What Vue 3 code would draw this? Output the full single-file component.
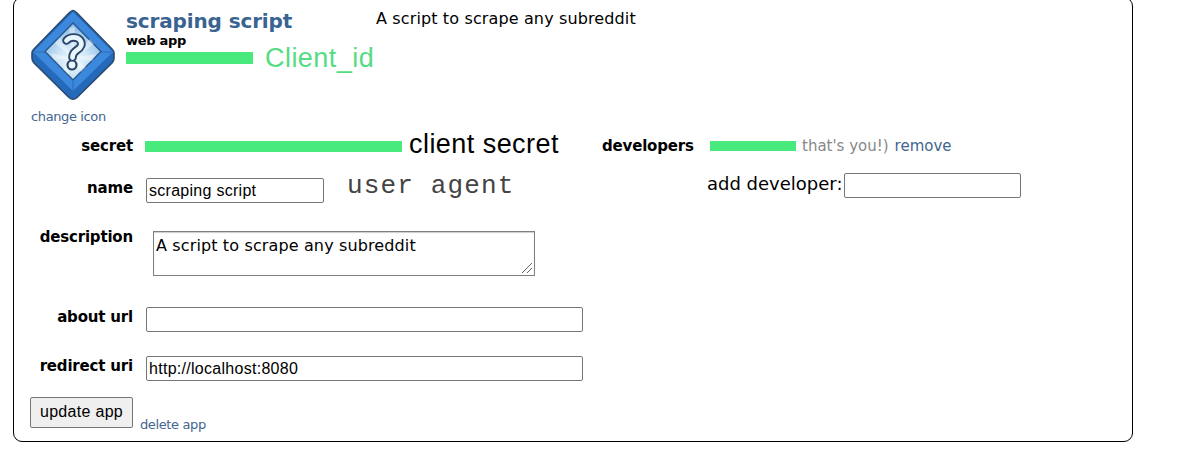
<template>
  <div class="page">
    <div class="app-card">
      <header class="app-header">
        <div class="icon-col">
          <svg class="app-icon" width="84" height="93" viewBox="0 0 84 93">
            <defs>
              <radialGradient id="glow" cx="50%" cy="65%" r="55%">
                <stop offset="0" stop-color="#f4fbfe" />
                <stop offset="0.5" stop-color="#cde5f6" />
                <stop offset="1" stop-color="#94c2ea" />
              </radialGradient>
            </defs>
            <path d="M42 2.5 Q43.5 2.5 46 5 L81 41 Q83 43 83 45 V50 Q83 53 81 55 L46 89.5 Q42 93 38 89.5 L3 55 Q1 53 1 50 V45 Q1 43 3 41 L38 5 Q40.500 2.500 42 2.500Z" fill="#2569bb" stroke="#2a4a70" stroke-width="1.6" />
            <path d="M42 4 L82 44 L42 83 L2 44Z" fill="#3c88dc" />
            <path d="M42 73 V83 M3 44 L14 44 M81 44 L70 44" stroke="#2f6db5" stroke-width="1" fill="none" />
            <path d="M42 15 L70 43.5 L42 72 L14 43.5Z" fill="url(#glow)" stroke="#2b5a90" stroke-width="1.5" />
            <path d="M42 50 L24 35 L29 30Z M42 50 L38 20 L44 19Z M42 50 L59 31 L63 36Z M42 50 L19 45 L23 52Z M42 50 L65 46 L61 53Z M42 50 L32 61 L37 66Z M42 50 L50 64 L55 59Z" fill="#fff" opacity="0.4" />
            <path d="M35.500 32.500 C39 28.500 46 28.500 49 32 C52 36 50 39.500 46 42 C42.500 44.200 41.500 46 41.500 49.500" fill="none" stroke="#2a4668" stroke-width="8.600" stroke-linecap="round" stroke-linejoin="round" />
            <circle cx="41" cy="57" r="5.6" fill="#2a4668" />
            <path d="M35.500 32.500 C39 28.500 46 28.500 49 32 C52 36 50 39.500 46 42 C42.500 44.200 41.500 46 41.500 49.500" fill="none" stroke="#e9f5fc" stroke-width="4.800" stroke-linecap="round" stroke-linejoin="round" />
            <circle cx="41" cy="57" r="3.4" fill="#e9f5fc" />
          </svg>
          <a class="link small">change icon</a>
        </div>
        <div class="title-col">
          <h2 class="title"><a>scraping script</a></h2>
          <div class="app-type">web app</div>
          <div class="client-id">
            <span class="redacted id-bar"></span>
            <span class="id-note">Client_id</span>
          </div>
        </div>
        <div class="summary">A script to scrape any subreddit</div>
      </header>

      <div class="columns">
        <form class="edit-form" @submit.prevent>
          <div class="row secret-row">
            <label>secret</label>
            <div class="value">
              <span class="redacted secret-bar"></span>
              <span class="secret-note">client secret</span>
            </div>
          </div>
          <div class="row name-row">
            <label for="name">name</label>
            <div class="value">
              <input id="name" v-model="form.name" class="short" type="text">
              <span class="agent-note">user agent</span>
            </div>
          </div>
          <div class="row desc-row">
            <label for="desc">description</label>
            <div class="textarea-wrap">
              <textarea id="desc" v-model="form.description" spellcheck="false"></textarea>
              <svg class="grip" width="12" height="12" viewBox="0 0 12 12">
                <path d="M1 11 L11 1 M6 11 L11 6" stroke="#666" stroke-width="1" />
              </svg>
            </div>
          </div>
          <div class="row about-row">
            <label for="about">about url</label>
            <input id="about" v-model="form.aboutUrl" type="text">
          </div>
          <div class="row redirect-row">
            <label for="redirect">redirect uri</label>
            <input id="redirect" v-model="form.redirectUri" type="text">
          </div>
          <div class="actions">
            <button type="submit">update app</button>
            <a class="link small delete">delete app</a>
          </div>
        </form>

        <section class="developers">
          <div class="dev-row">
            <label>developers</label>
            <span class="redacted dev-bar"></span>
            <span class="you">that's you!)</span>
            <a class="link remove">remove</a>
          </div>
          <div class="add-row">
            <span class="add-label">add developer:</span>
            <input v-model="newDeveloper" type="text">
          </div>
        </section>
      </div>
    </div>
  </div>
</template>

<script setup>
import { reactive, ref } from 'vue'

const form = reactive({
  name: 'scraping script',
  description: 'A script to scrape any subreddit',
  aboutUrl: '',
  redirectUri: 'http://localhost:8080',
})
const newDeveloper = ref('')
</script>

<style>
body { background: #fff; overflow: hidden; }
</style>

<style scoped>
.page {
  height: 449px;
  overflow: hidden;
  display: flex;
  align-items: flex-start;
  font-family: "DejaVu Sans", Verdana, sans-serif;
  color: #000;
}

.app-card {
  box-sizing: border-box;
  width: 1120px;
  height: 445px;
  margin: -3px 0 0 13px;
  border: 1px solid #000;
  border-radius: 9px;
}

.link { color: #426690; cursor: pointer; }
.small { font-size: 13px; line-height: 16px; letter-spacing: -0.38px; }
.redacted { background: #48ea7e; flex-shrink: 0; }

/* Header */
.app-header {
  height: 134px;
  display: flex;
  white-space: nowrap;
}
.icon-col {
  width: 95px;
  padding: 10px 0 0 17px;
  display: flex;
  flex-direction: column;
}
.icon-col .link { margin-top: 8px; }
.title-col { width: 250px; padding-top: 10px; }
.title {
  margin: 0;
  font-size: 20px;
  line-height: 26px;
  letter-spacing: -0.13px;
  color: #396391;
}
.app-type { font-size: 13px; font-weight: bold; line-height: 14px; letter-spacing: -0.3px; }
.client-id { display: flex; align-items: flex-start; }
.id-bar { width: 127px; height: 12px; margin: 4px 12px 0 0; }
.id-note {
  font: 27px/30px "Liberation Sans", Arial, sans-serif;
  letter-spacing: 0.45px;
  margin-top: -5px;
  color: #55dc83;
}
.summary { padding-top: 11px; font-size: 16px; line-height: 20px; letter-spacing: 0.13px; }

.columns { display: flex; }
.edit-form { width: 588px; }

/* Form rows */
.row {
  display: grid;
  grid-template-columns: 119px 1fr;
  column-gap: 13px;
  align-items: start;
}
.row label { text-align: right; }
label {
  font-size: 15px;
  font-weight: bold;
  line-height: 20px;
  letter-spacing: -0.18px;
  white-space: nowrap;
}
.value { display: flex; white-space: nowrap; }
.secret-row { height: 46px; }
.secret-row label { margin-top: 4px; }
.secret-bar { width: 257px; height: 11px; margin: 9px 7px 0 -1px; }
.secret-note {
  font: 27px/30px "Liberation Sans", Arial, sans-serif;
  letter-spacing: 0.45px;
  margin-top: -3px;
}
.name-row { height: 53px; }
.agent-note {
  font: 26px/30px "Liberation Mono", "Courier New", monospace;
  letter-spacing: 1.15px;
  margin: -7px 0 0 23px;
  color: #444;
}
.desc-row { height: 76px; }
.desc-row label { margin-top: -4px; }
.about-row { height: 49px; }
.redirect-row { height: 41px; }

input {
  box-sizing: border-box;
  width: 437px;
  height: 25px;
  margin: 0;
  padding: 1px 2px;
  border: 1px solid #767676;
  border-radius: 2px;
  background: #fff;
  font: 16px "Liberation Sans", Arial, sans-serif;
  letter-spacing: 0.28px;
  color: #000;
  outline: none;
}
input.short { width: 178px; }

.textarea-wrap {
  position: relative;
  width: 382px;
  height: 45px;
  margin-left: 7px;
}
textarea {
  display: block;
  box-sizing: border-box;
  width: 100%;
  height: 100%;
  margin: 0;
  padding: 4px 2px 0;
  border: 1px solid #808080;
  box-shadow: inset 0 1px 1px #ccc;
  font: 16px/20px "DejaVu Sans", Verdana, sans-serif;
  letter-spacing: 0.13px;
  color: #000;
  resize: none;
  overflow: hidden;
  outline: none;
}
.grip { position: absolute; right: 2px; bottom: 2px; }

.actions { display: flex; padding-left: 16px; }
button {
  box-sizing: border-box;
  width: 103px;
  height: 31px;
  padding: 0 0 2px;
  border: 1px solid #767676;
  border-radius: 2px;
  background: #efefef;
  font: 16px "Liberation Sans", Arial, sans-serif;
  letter-spacing: 0.3px;
  color: #000;
}
.delete { margin: 20px 0 0 7px; }

/* Developers */
.dev-row {
  display: flex;
  align-items: center;
  height: 20px;
  margin-top: 4px;
  font-size: 15px;
  line-height: 20px;
  white-space: nowrap;
}
.dev-row label { width: 108px; }
.dev-bar { width: 86px; height: 10px; margin-right: 6px; }
.you { color: #888; margin-right: 6px; }
.add-row {
  display: flex;
  align-items: flex-start;
  margin: 17px 0 0 105px;
  white-space: nowrap;
}
.add-label { font-size: 18px; line-height: 21px; width: 137px; }
.add-row input { width: 177px; }
</style>
